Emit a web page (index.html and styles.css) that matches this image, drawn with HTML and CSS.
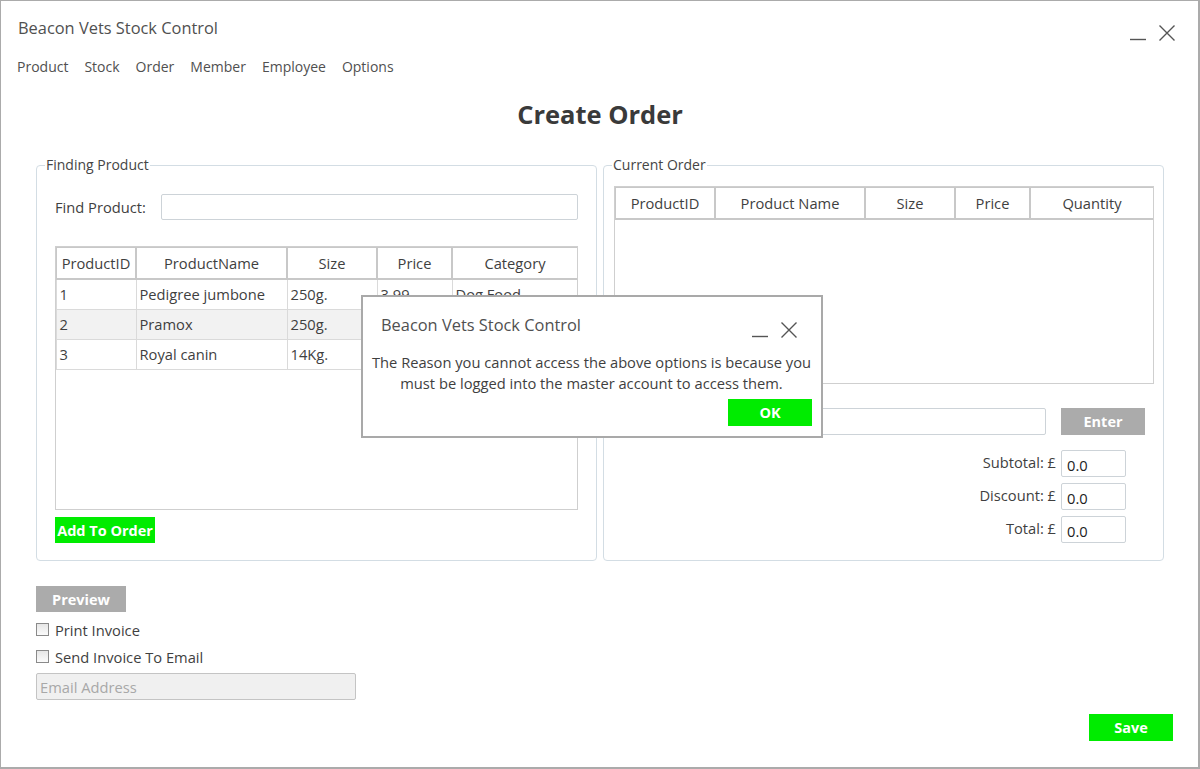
FILE: index.html
```html
<!DOCTYPE html>
<html lang="en">
<head>
<meta charset="utf-8">
<title>Beacon Vets Stock Control</title>
<link rel="stylesheet" href="styles.css">
</head>
<body>
<div class="window">
  <header class="titlebar">
    <span class="app-title">Beacon Vets Stock Control</span>
    <div class="win-ctrls">
      <svg class="ctrl" width="18" height="18" viewBox="0 0 18 18"><path d="M1 15.5H17" stroke="#555" stroke-width="1.4" fill="none"/></svg>
      <svg class="ctrl" width="18" height="18" viewBox="0 0 18 18"><path d="M1.5 1.5L16.5 16.5M16.5 1.5L1.5 16.5" stroke="#555" stroke-width="1.4" fill="none"/></svg>
    </div>
  </header>
  <nav class="menu">
    <span>Product</span><span>Stock</span><span>Order</span><span>Member</span><span>Employee</span><span>Options</span>
  </nav>
  <h1 class="page-title">Create Order</h1>

  <div class="panels">
    <fieldset class="panel panel-left">
      <legend>Finding Product</legend>
      <div class="find-row">
        <label class="find-label">Find Product:</label>
        <div class="textbox find-input"></div>
      </div>
      <div class="grid grid-left">
        <table>
          <colgroup><col style="width:80px"><col style="width:151px"><col style="width:90px"><col style="width:75px"><col style="width:126px"></colgroup>
          <thead><tr><th>ProductID</th><th>ProductName</th><th>Size</th><th>Price</th><th>Category</th></tr></thead>
          <tbody>
            <tr><td>1</td><td>Pedigree jumbone</td><td>250g.</td><td>3.99</td><td>Dog Food</td></tr>
            <tr class="alt"><td>2</td><td>Pramox</td><td>250g.</td><td>5.49</td><td>Medicine</td></tr>
            <tr><td>3</td><td>Royal canin</td><td>14Kg.</td><td>45.99</td><td>Dog Food</td></tr>
          </tbody>
        </table>
      </div>
      <button class="btn btn-green btn-add">Add To Order</button>
    </fieldset>

    <fieldset class="panel panel-right">
      <legend>Current Order</legend>
      <div class="grid grid-right">
        <table>
          <colgroup><col style="width:100px"><col style="width:150px"><col style="width:90px"><col style="width:75px"><col style="width:124px"></colgroup>
          <thead><tr><th>ProductID</th><th>Product Name</th><th>Size</th><th>Price</th><th>Quantity</th></tr></thead>
          <tbody></tbody>
        </table>
      </div>
      <div class="code-row">
        <div class="textbox code-input"></div>
        <button class="btn btn-gray btn-enter">Enter</button>
      </div>
      <div class="totals">
        <div class="total-row"><span>Subtotal: £</span><div class="textbox amount">0.0</div></div>
        <div class="total-row"><span>Discount: £</span><div class="textbox amount">0.0</div></div>
        <div class="total-row"><span>Total: £</span><div class="textbox amount">0.0</div></div>
      </div>
    </fieldset>
  </div>

  <div class="footer">
    <button class="btn btn-gray btn-preview">Preview</button>
    <label class="check-row"><span class="checkbox"></span>Print Invoice</label>
    <label class="check-row"><span class="checkbox"></span>Send Invoice To Email</label>
    <div class="textbox email-input">Email Address</div>
  </div>
  <div class="save-row">
    <button class="btn btn-green btn-save">Save</button>
  </div>

  <div class="dialog">
    <div class="dialog-head">
      <span class="dialog-title">Beacon Vets Stock Control</span>
      <div class="win-ctrls dialog-ctrls">
        <svg class="ctrl" width="18" height="18" viewBox="0 0 18 18"><path d="M1 15.5H17" stroke="#555" stroke-width="1.4" fill="none"/></svg>
        <svg class="ctrl" width="18" height="18" viewBox="0 0 18 18"><path d="M1.5 1.5L16.5 16.5M16.5 1.5L1.5 16.5" stroke="#555" stroke-width="1.4" fill="none"/></svg>
      </div>
    </div>
    <p class="dialog-msg">The Reason you cannot access the above options is because you must be logged into the master account to access them.</p>
    <div class="dialog-actions">
      <button class="btn btn-green btn-ok">OK</button>
    </div>
  </div>
</div>
</body>
</html>
```

FILE: styles.css
```css
* { box-sizing: border-box; }

html, body {
  margin: 0;
  padding: 0;
  background: #ffffff;
}

body {
  font-family: "Open Sans", "Noto Sans", "Liberation Sans", sans-serif;
  color: #3f3f3f;
}

.window {
  position: relative;
  width: 1200px;
  height: 769px;
  border-top: 1px solid #ababab;
  border-left: 1px solid #ababab;
  border-right: 2px solid #ababab;
  border-bottom: 2px solid #ababab;
  padding: 0 25px 0 35px;
  overflow: hidden;
}

/* title bar */
.titlebar {
  height: 53px;
  margin-left: -18px;
  display: flex;
  align-items: center;
  justify-content: space-between;
}
.app-title {
  font-size: 16.4px;
  color: #505050;
}
.win-ctrls {
  display: flex;
  gap: 11px;
  align-items: center;
  margin-top: 11px;
  margin-right: -3px;
}
.ctrl { display: block; }

/* menu */
.menu {
  height: 24px;
  margin-left: -19px;
  display: flex;
  align-items: center;
  gap: 16px;
  font-size: 14px;
  color: #505050;
}

.page-title {
  margin: 0;
  height: 73px;
  display: flex;
  align-items: center;
  justify-content: center;
  font-size: 25.5px;
  font-weight: 700;
  color: #3a3a3a;
  padding-right: 9px;
  padding-bottom: 2px;
}

/* panels */
.panels {
  display: flex;
  gap: 6px;
  margin-top: 4px;
}
.panel {
  margin: 0;
  width: 561px;
  height: 406px;
  border: 1px solid #d3dde4;
  border-radius: 4px;
  min-width: 0;
}
.panel legend {
  font-size: 14px;
  line-height: 20px;
  height: 20px;
  padding: 0 1px;
  color: #454545;
}
.panel-left legend { margin-left: -10px; }
.panel-right legend { margin-left: -2px; }
.panel-left { padding: 19px 18px 17px 18px; }
.panel-right { padding: 11px 9px 17px 10px; }

.find-row {
  display: flex;
  align-items: center;
  height: 26px;
}
.find-label {
  width: 106px;
  font-size: 14.7px;
  color: #3f3f3f;
}
.textbox {
  border: 1px solid #cdd3d8;
  border-radius: 2px;
  background: #fff;
  height: 26px;
}
.find-input { width: 417px; }

/* grids */
.grid {
  border: 1px solid #cfcfcf;
  background: #fff;
  overflow: hidden;
}
.grid-left { margin-top: 26px; width: 523px; height: 264px; }
.grid-right { width: 540px; height: 198px; }

.grid table {
  border-collapse: collapse;
  table-layout: fixed;
  width: calc(100% + 2px);
  margin: -1px 0 0 -1px;
}

.grid th {
  height: 32px;
  border: 2px solid #c8c8c8;
  font-weight: 400;
  font-size: 14.7px;
  color: #3f3f3f;
  padding: 0;
  text-align: center;
  white-space: nowrap;
}
.grid td {
  height: 30px;
  border: 1px solid #dadada;
  font-size: 14.7px;
  padding: 0 0 0 3px;
  color: #3f3f3f;
  white-space: nowrap;
  overflow: hidden;
}
.grid tr.alt td { background: #f2f2f2; }

/* buttons */
.btn {
  border: none;
  border-radius: 0;
  font-family: inherit;
  font-weight: 700;
  color: #ffffff;
  font-size: 14.5px;
  padding: 0;
  display: flex;
  align-items: center;
  justify-content: center;
}
.btn-green { background: #00ec00; }
.btn-gray { background: #ababab; }

.btn-add {
  margin-top: 7px;
  width: 100px;
  height: 26px;
}

.code-row {
  display: flex;
  align-items: center;
  margin-top: 24px;
  height: 27px;
}
.code-input { width: 432px; height: 27px; }
.btn-enter { margin-left: 15px; width: 84px; height: 27px; }

.totals {
  display: flex;
  flex-direction: column;
  align-items: flex-end;
  gap: 6px;
  margin-top: 15px;
  padding-right: 28px;
}
.total-row {
  display: flex;
  align-items: center;
  gap: 5px;
  font-size: 14.7px;
  color: #3f3f3f;
}
.total-row span { margin-top: -3px; }
.amount {
  width: 65px;
  height: 27px;
  font-size: 14.7px;
  padding: 4px 0 0 5px;
  color: #222;
  line-height: 20px;
}

/* footer */
.footer {
  margin-top: 25px;
  display: flex;
  flex-direction: column;
  align-items: flex-start;
}
.btn-preview { width: 90px; height: 26px; }
.check-row {
  display: flex;
  align-items: center;
  height: 27px;
  font-size: 14.7px;
  color: #3f3f3f;
}
.check-row:first-of-type { margin-top: 4px; }
.checkbox {
  width: 13px;
  height: 13px;
  border: 1px solid #8a8a8a;
  background: linear-gradient(#e6e6e6, #fbfbfb);
  margin-right: 6px;
  margin-top: -1px;
}
.email-input {
  margin-top: 3px;
  width: 320px;
  height: 27px;
  background: #f0f0f0;
  border-color: #c4c4c4;
  color: #a8a8a8;
  font-size: 14.7px;
  padding: 3px 0 0 3px;
}

.save-row {
  display: flex;
  justify-content: flex-end;
  margin-top: 14px;
}
.btn-save { width: 84px; height: 27px; }

/* dialog */
.dialog {
  position: absolute;
  left: 360px;
  top: 294px;
  width: 462px;
  height: 143px;
  border: 2px solid #a9a9a9;
  background: #ffffff;
  padding: 0 8px 0 7px;
}
.dialog-head {
  display: flex;
  justify-content: space-between;
  align-items: center;
  height: 55px;
  padding-left: 11px;
  padding-right: 15px;
}
.dialog-title {
  font-size: 16.4px;
  color: #505050;
  margin-top: 0;
}
.dialog-ctrls { margin-top: 10px; margin-right: 0; }
.dialog-msg {
  margin: 0;
  text-align: center;
  font-size: 14.7px;
  line-height: 21px;
  color: #3f3f3f;
}
.dialog-actions {
  display: flex;
  justify-content: flex-end;
  margin-top: 5px;
  padding-right: 1px;
}
.btn-ok { width: 84px; height: 27px; }
```
